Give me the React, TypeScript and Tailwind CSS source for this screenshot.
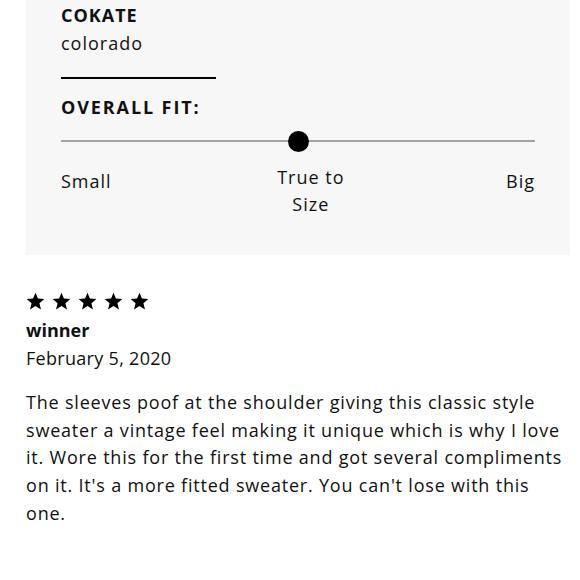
import React from "react";

const Star = () => (
  <svg width="19" height="18" viewBox="0 0 24 23" className="block">
    <path d="M12 0.8l3.1 7.6 8.2 0.6-6.3 5.3 2 8-7-4.4-7 4.4 2-8L0.7 9l8.2-0.6z" fill="#000" />
  </svg>
);

export default function App() {
  return (
    <div className="w-[580px] h-[580px] bg-white text-[#111] overflow-hidden" style={{ fontFamily: "'Open Sans', Lato, sans-serif" }}>
      <div className="ml-[26px] w-[544px] h-[255px] bg-[#f7f7f7] px-[35px] pt-[3px]">
        <div className="text-[18px] font-bold leading-[24px] tracking-[1px]">COKATE</div>
        <div className="mt-[2px] text-[18px] leading-[28px] tracking-[1px]">colorado</div>
        <div className="w-[155px] h-[2px] bg-black mt-[20px]"></div>
        <div className="mt-[17px] text-[18px] font-bold leading-[22px] tracking-[1.9px]">OVERALL FIT:</div>
        <div className="relative mt-[12px] h-[22px] flex items-center">
          <div className="w-full h-[2px] bg-[#a3a3a3]"></div>
          <div className="absolute left-[227px] top-[1px] w-[21px] h-[21px] rounded-full bg-black"></div>
        </div>
        <div className="flex justify-between items-start text-[18px] leading-[27px] mt-[12px] tracking-[1px]">
          <div className="mt-[4px]">Small</div>
          <div className="text-center pl-[4px]">True to<br />Size</div>
          <div className="mt-[4px]">Big</div>
        </div>
      </div>
      <div className="px-[26px] pt-[37px]">
        <div className="flex gap-[7px]">
          <Star /><Star /><Star /><Star /><Star />
        </div>
        <div className="mt-[6px] text-[18px] font-bold leading-[28px]">winner</div>
        <div className="text-[18px] leading-[28px] tracking-[0.3px]">February 5, 2020</div>
        <p className="mt-[17px] text-[18px] leading-[27.7px] tracking-[0.8px] w-[542px]">
          The sleeves poof at the shoulder giving this classic style sweater a vintage feel making it unique which is why I love it. Wore this for the first time and got several compliments on it. It's a more fitted sweater. You can't lose with this one.
        </p>
      </div>
    </div>
  );
}
